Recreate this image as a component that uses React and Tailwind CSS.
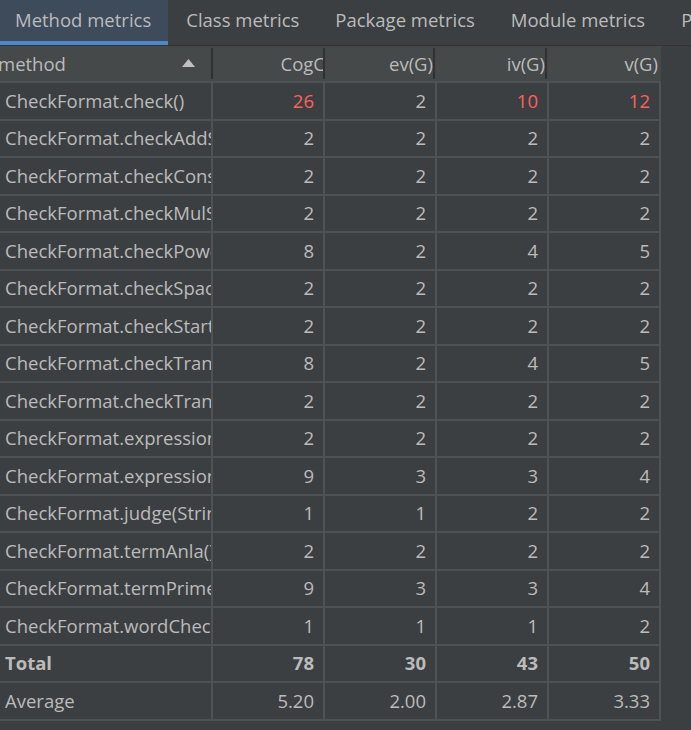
import React from "react";

const TABS = ["Method metrics", "Class metrics", "Package metrics", "Module metrics", "Project metrics"];

const ROWS = [
  ["CheckFormat.check()", 26, 2, 10, 12],
  ["CheckFormat.checkAddSub()", 2, 2, 2, 2],
  ["CheckFormat.checkConstant()", 2, 2, 2, 2],
  ["CheckFormat.checkMulSign()", 2, 2, 2, 2],
  ["CheckFormat.checkPower()", 8, 2, 4, 5],
  ["CheckFormat.checkSpace()", 2, 2, 2, 2],
  ["CheckFormat.checkStart()", 2, 2, 2, 2],
  ["CheckFormat.checkTrans()", 8, 2, 4, 5],
  ["CheckFormat.checkTranSign()", 2, 2, 2, 2],
  ["CheckFormat.expressionAnla()", 2, 2, 2, 2],
  ["CheckFormat.expressionPrime()", 9, 3, 3, 4],
  ["CheckFormat.judge(String)", 1, 1, 2, 2],
  ["CheckFormat.termAnla()", 2, 2, 2, 2],
  ["CheckFormat.termPrime()", 9, 3, 3, 4],
  ["CheckFormat.wordCheck()", 1, 1, 1, 2],
];

// values over the threshold are shown red
const isHot = (col, v) => (col === 1 && v > 15) || (col === 3 && v > 8) || (col === 4 && v > 10);

const widths = ["w-[213px]", "w-[112px]", "w-[112px]", "w-[112px]", "w-[112px]"];
const headPad = ["pr-[18px] justify-between", "-mr-[2px] justify-end", "pr-[2px] justify-end", "pr-[2px] justify-end", "pr-[1px] justify-end"];

function Row({ cells, bold }) {
  return (
    <div className="flex h-[37.5px] border-b-2 border-[#4e5254] w-[661px]">
      {cells.map((c, i) => (
        <div
          key={i}
          className={`${widths[i]} shrink-0 h-full border-r-2 border-[#4e5254] flex items-center overflow-hidden whitespace-nowrap ${
            i === 0 ? "pl-[5px]" : "justify-end pr-[9px]"
          } ${bold ? "font-bold" : ""} ${isHot(i, c) && !bold ? "text-[#ff5f5b]" : ""}`}
        >
          {c}
        </div>
      ))}
    </div>
  );
}

export default function App() {
  return (
    <div
      className="w-[691px] h-[730px] bg-[#3c3f41] text-[#bbbbbb] text-[18.5px] overflow-hidden"
      style={{ fontFamily: '"Open Sans", "Noto Sans", sans-serif' }}
    >
      <div className="flex h-[46px] border-b border-[#323232] whitespace-nowrap">
        {TABS.map((t, i) => (
          <div
            key={t}
            className={`relative h-full flex items-center pb-[5px] shrink-0 ${
              i === 0 ? "bg-[#3e4b5b] pl-[15px] pr-[17px]" : "px-[18px]"
            }`}
          >
            {t}
            {i === 0 && <div className="absolute left-0 right-0 bottom-0 h-[4px] bg-[#4a88c7]" />}
          </div>
        ))}
      </div>

      <div className="flex h-[37px] bg-[#45494a] border-b-2 border-[#4e5254] w-[661px]">
        {["method", "CogC", "ev(G)", "iv(G)", "v(G)"].map((h, i) => (
          <div
            key={h}
            className={`${widths[i]} shrink-0 h-full relative flex items-center overflow-hidden whitespace-nowrap ${headPad[i]}`}
          >
            <span className={i === 0 ? "-ml-[2px]" : ""}>{h}</span>
            {i === 0 && (
              <svg width="13" height="8" viewBox="0 0 13 8" className="mt-[-2px]">
                <path d="M6.5 0 L13 8 L0 8 Z" fill="#c0c0c0" />
              </svg>
            )}
            {i < 4 && <div className="absolute right-0 top-[2px] bottom-[2px] w-[2px] bg-[#2f3133]" />}
          </div>
        ))}
      </div>

      {ROWS.map((r, i) => (
        <Row key={i} cells={r} />
      ))}
      <Row cells={["Total", 78, 30, 43, 50]} bold />
      <Row cells={["Average", "5.20", "2.00", "2.87", "3.33"]} />
    </div>
  );
}
